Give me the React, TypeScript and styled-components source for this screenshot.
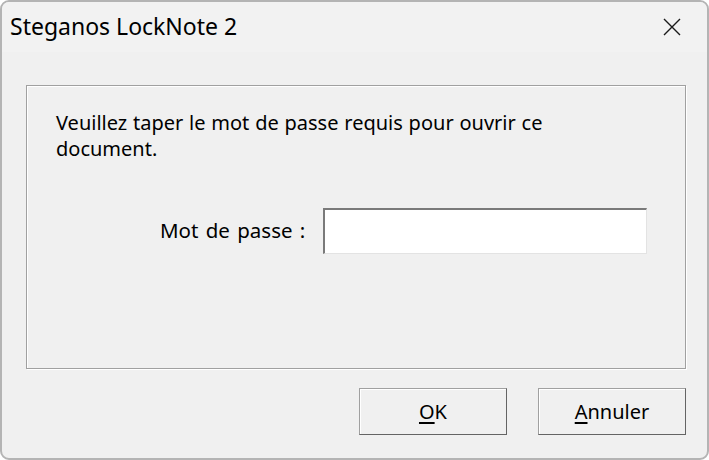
import styled, { createGlobalStyle } from "styled-components";

const GlobalStyle = createGlobalStyle`
  html, body {
    margin: 0;
    padding: 0;
    background: #ffffff;
  }
  body {
    font-family: "Noto Sans", "Open Sans", sans-serif;
  }
`;

export default function App() {
  return (
    <>
      <GlobalStyle />
      <Window>
        <TitleBar>
          <Title>Steganos LockNote 2</Title>
          <CloseButton aria-label="Fermer">
            <svg width="20" height="20" viewBox="0 0 20 20">
              <path d="M2 2 L18 18 M18 2 L2 18" stroke="#1a1a1a" strokeWidth="1.4" fill="none" />
            </svg>
          </CloseButton>
        </TitleBar>
        <Body>
          <GroupBox>
            <Message>Veuillez taper le mot de passe requis pour ouvrir ce document.</Message>
            <FieldRow>
              <FieldLabel>Mot de passe :</FieldLabel>
              <PasswordInput type="password" />
            </FieldRow>
          </GroupBox>
          <ButtonRow>
            <DialogButton>
              <u>O</u>K
            </DialogButton>
            <DialogButton>
              <u>A</u>nnuler
            </DialogButton>
          </ButtonRow>
        </Body>
      </Window>
    </>
  );
}

const Window = styled.div`
  width: 709px;
  height: 460px;
  box-sizing: border-box;
  border: 2px solid #b4b4b4;
  border-radius: 9px;
  background: #f0f0f0;
  display: flex;
  flex-direction: column;
  overflow: hidden;
`;

const TitleBar = styled.div`
  height: 50px;
  display: flex;
  align-items: center;
  justify-content: space-between;
  padding-left: 8px;
  background: #f2f2f2;
`;

const Title = styled.div`
  font-size: 23px;
  color: #000;
  margin-top: -3px;
`;

const CloseButton = styled.div`
  width: 70px;
  height: 50px;
  display: flex;
  align-items: center;
  justify-content: center;
`;

const Body = styled.div`
  flex: 1;
  display: flex;
  flex-direction: column;
  padding: 33px 21px 0 24px;
`;

const GroupBox = styled.div`
  height: 284px;
  box-sizing: border-box;
  border: 1px solid #a0a0a0;
  box-shadow: inset 1px 1px 0 #ffffff, 1px 1px 0 #ffffff;
  padding: 24px 30px 0 29px;
  display: flex;
  flex-direction: column;
`;

const Message = styled.div`
  font-size: 20px;
  line-height: 26px;
  color: #000;
  width: 540px;
  word-spacing: 0.6px;
`;

const FieldRow = styled.div`
  display: flex;
  align-items: center;
  margin-top: 46px;
  padding-left: 104px;
`;

const FieldLabel = styled.div`
  font-size: 20.5px;
  color: #000;
  width: 163px;
  margin-top: -2px;
  word-spacing: 2px;
`;

const PasswordInput = styled.input`
  width: 324px;
  height: 46px;
  box-sizing: border-box;
  background: #ffffff;
  border: none;
  border-top: 2px solid #7a7a7a;
  border-left: 2px solid #7a7a7a;
  border-bottom: 1px solid #e3e3e3;
  border-right: 1px solid #e3e3e3;
  outline: none;
  padding: 0 6px;
  font-size: 18px;
`;

const ButtonRow = styled.div`
  display: flex;
  justify-content: flex-end;
  gap: 31px;
  margin-top: 19px;
`;

const DialogButton = styled.button`
  width: 148px;
  height: 47px;
  box-sizing: border-box;
  background: #f0f0f0;
  border: 1px solid #a0a0a0;
  border-bottom-color: #646464;
  border-right-color: #646464;
  box-shadow: inset 1px 1px 0 #ffffff;
  font-family: "Noto Sans", "Open Sans", sans-serif;
  font-size: 20px;
  color: #000;
  padding: 0;
  cursor: default;

  u {
    text-underline-offset: 3px;
  }
`;
